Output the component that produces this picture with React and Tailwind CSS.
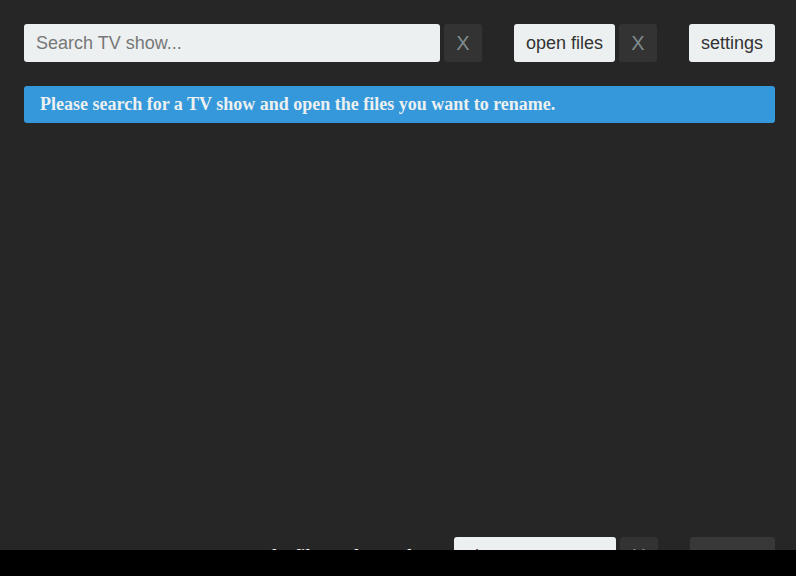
import React from "react";

const serif = { fontFamily: '"Liberation Serif", "Times New Roman", serif' };

export default function App() {
  return (
    <div className="w-[796px] h-[576px] flex flex-col bg-black font-['Liberation_Sans',Arial,sans-serif]">
      <div className="h-[550px] bg-[#262626] flex flex-col overflow-hidden pl-[24px] pr-[21px] pt-[24px]">
        {/* top bar */}
        <div className="flex items-center h-[38px]">
          <input
            placeholder="Search TV show..."
            className="w-[416px] h-[38px] rounded-[3px] bg-[#ecf0f1] px-[12px] text-[18px] text-[#333] placeholder:text-[#777] outline-none"
          />
          <button className="ml-[4px] w-[38px] h-[38px] rounded-[3px] bg-[#333333] text-[20px] text-[#7f8c8d]">X</button>
          <button className="ml-[32px] w-[101px] h-[38px] rounded-[3px] bg-[#ecf0f1] text-[18px] text-[#333]">open files</button>
          <button className="ml-[4px] w-[38px] h-[38px] rounded-[3px] bg-[#333333] text-[20px] text-[#7f8c8d]">X</button>
          <button className="ml-[32px] w-[86px] h-[38px] rounded-[3px] bg-[#ecf0f1] text-[18px] text-[#333]">settings</button>
        </div>

        {/* info banner */}
        <div className="mt-[24px] h-[37px] rounded-[3px] bg-[#3498db] px-[16px] flex items-center">
          <span style={serif} className="text-[18px] font-bold text-[#ecf0f1]">
            Please search for a TV show and open the files you want to rename.
          </span>
        </div>

        <div className="flex-1" />

        {/* footer (cut off by window edge) */}
        <div className="h-[13px] shrink-0">
          <div className="flex items-center h-[38px]">
            <span style={serif} className="w-[430px] shrink-0 whitespace-nowrap text-right pr-[8px] text-[18px] font-bold text-[#ecf0f1]">
              now rename the files and save them:
            </span>
            <div className="w-[162px] h-[38px] shrink-0 rounded-[3px] bg-[#ecf0f1] px-[12px] flex items-center whitespace-nowrap overflow-hidden text-[18px] text-[#333]">
              choose a name...
            </div>
            <button className="ml-[4px] w-[38px] h-[38px] shrink-0 rounded-[3px] bg-[#333333] text-[20px] text-[#7f8c8d]">X</button>
            <button className="ml-[32px] w-[85px] h-[38px] shrink-0 rounded-[3px] bg-[#383838] text-[18px] text-[#7f8c8d]">rename</button>
          </div>
        </div>
      </div>
      <div className="h-[26px] bg-black" />
    </div>
  );
}
